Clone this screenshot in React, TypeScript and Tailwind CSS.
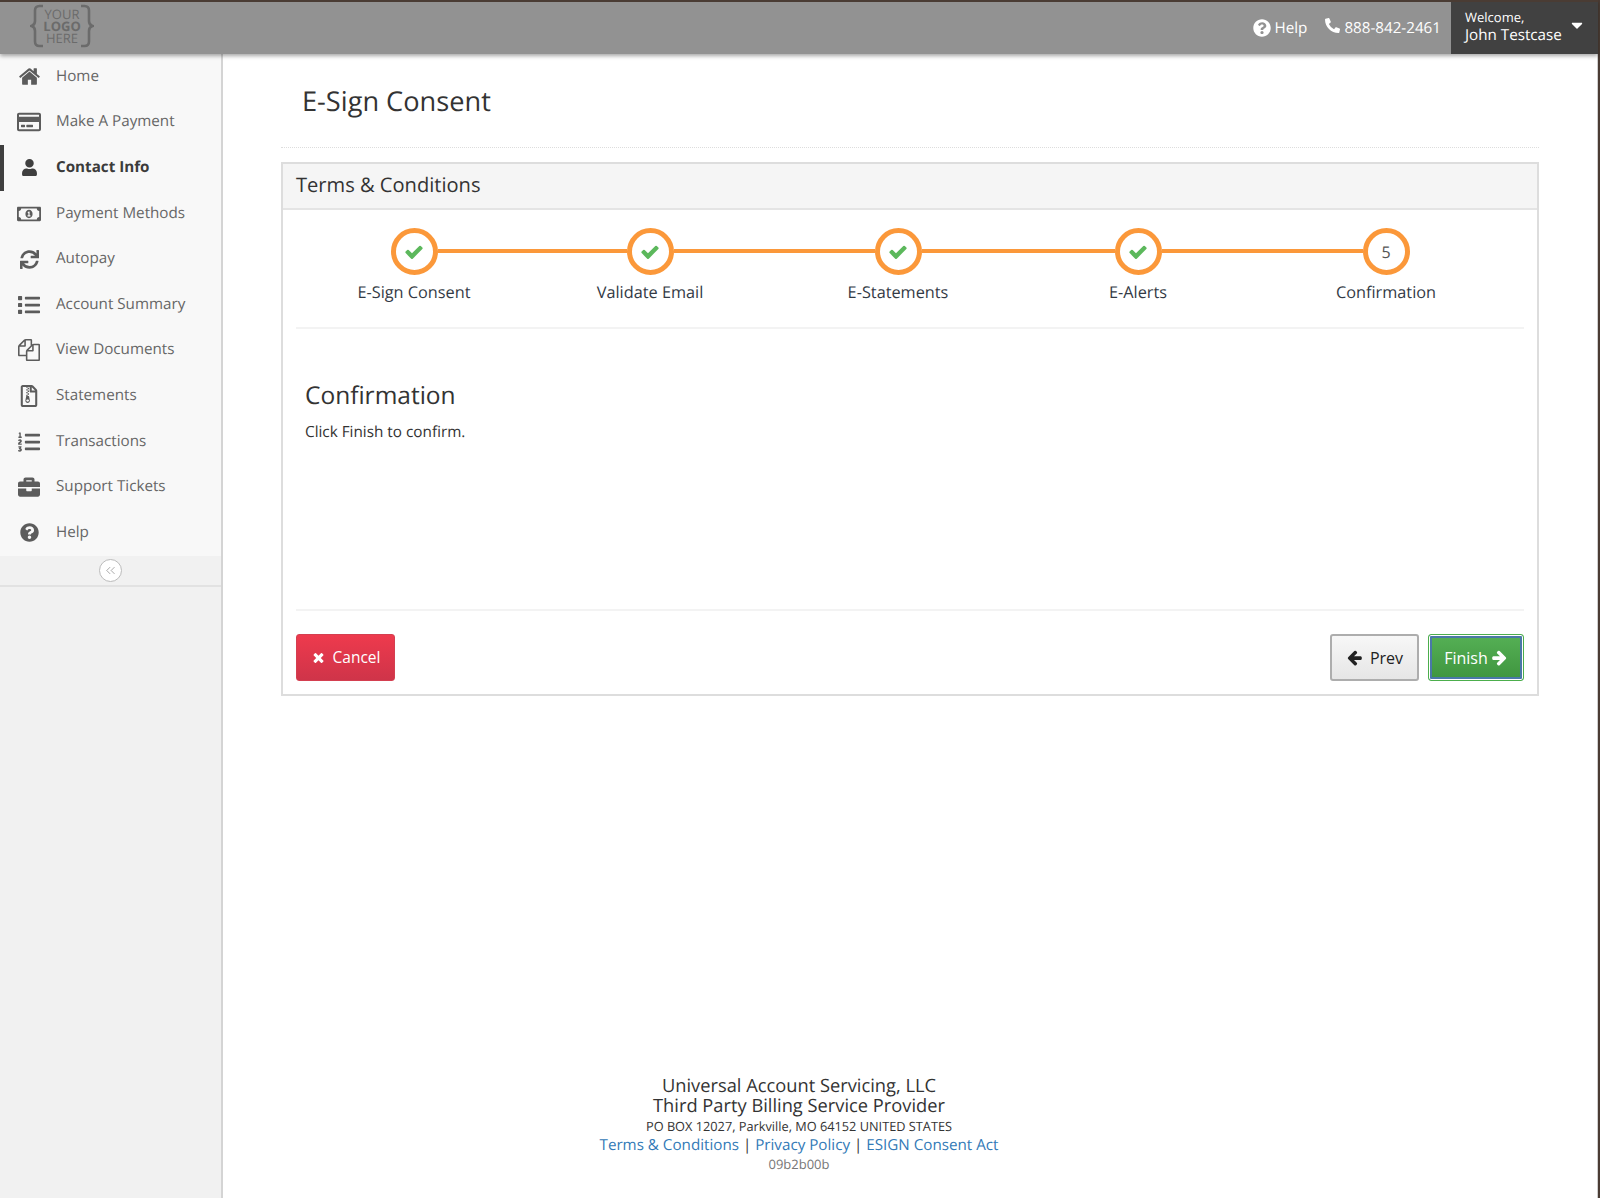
import type { ReactNode } from 'react'
import {
  FaBriefcase,
  FaCaretDown,
  FaList,
  FaListOl,
  FaPhoneAlt,
  FaQuestionCircle,
  FaRegCreditCard,
  FaRegFileArchive,
  FaRegMoneyBillAlt,
  FaSync,
  FaUser,
} from 'react-icons/fa'
import { ChevronsLeft } from 'lucide-react'

// font-awesome 4 shapes that the fa5 set in react-icons drew differently
function Fa4({ d, className }: { d: string; className?: string }) {
  return (
    <svg viewBox="0 0 1792 1792" fill="currentColor" className={className}>
      <path d={d} />
    </svg>
  )
}

const homePath =
  'M1472 992v480q0 26-19 45t-45 19h-384v-384h-256v384h-384q-26 0-45-19t-19-45v-480q0-1 .5-3t.5-3l575-474 575 474q1 2 1 6zm223-69l-62 74q-8 9-21 11h-3q-13 0-21-7l-692-577-692 577q-12 8-24 7-13-2-21-11l-62-74q-8-10-7-23.5t11-21.5l719-599q32-26 76-26t76 26l244 204v-195q0-14 9-23t23-9h192q14 0 23 9t9 23v408l219 182q10 8 11 21.5t-7 23.5z'
const filesPath =
  'M1696 384q40 0 68 28t28 68v1216q0 40-28 68t-68 28h-960q-40 0-68-28t-28-68v-288h-544q-40 0-68-28t-28-68v-672q0-40 20-88t48-76l408-408q28-28 76-48t88-20h416q40 0 68 28t28 68v328q68-40 128-40h416zm-544 213l-299 299h299v-299zm-640-384l-299 299h299v-299zm196 647l316-316v-416h-384v416q0 40-28 68t-68 28h-416v640h512v-256q0-40 20-88t48-76zm956 804v-1152h-384v416q0 40-28 68t-68 28h-416v640h896z'
const checkPath =
  'M1671 566q0 40-28 68l-724 724-136 136q-28 28-68 28t-68-28l-136-136-362-362q-28-28-28-68t28-68l136-136q28-28 68-28t68 28l294 295 656-657q28-28 68-28t68 28l136 136q28 28 28 68z'
const timesPath =
  'M1490 1322q0 40-28 68l-136 136q-28 28-68 28t-68-28l-294-294-294 294q-28 28-68 28t-68-28l-136-136q-28-28-28-68t28-68l294-294-294-294q-28-28-28-68t28-68l136-136q28-28 68-28t68 28l294 294 294-294q28-28 68-28t68 28l136 136q28 28 28 68t-28 68l-294 294 294 294q28 28 28 68z'
const arrowLeftPath =
  'M1664 896v128q0 53-32.5 90.5t-84.5 37.5h-704l293 294q38 36 38 90t-38 90l-75 76q-37 37-90 37-52 0-91-37l-651-652q-37-37-37-90 0-52 37-91l651-650q38-38 91-38 52 0 90 38l75 74q38 38 38 91t-38 91l-293 293h704q52 0 84.5 37.5t32.5 90.5z'
const arrowRightPath =
  'M1600 960q0 54-37 91l-651 651q-39 37-91 37-51 0-90-37l-75-75q-38-38-38-91t38-91l293-293h-704q-52 0-84.5-37.5t-32.5-90.5v-128q0-53 32.5-90.5t84.5-37.5h704l-293-294q-38-36-38-90t38-90l75-75q38-38 90-38 53 0 91 38l651 651q37 35 37 90z'

const navItems: { label: string; icon: ReactNode; active?: boolean }[] = [
  { label: 'Home', icon: <Fa4 d={homePath} className="w-[23px] h-[23px]" /> },
  { label: 'Make A Payment', icon: <FaRegCreditCard className="text-[24px]" /> },
  { label: 'Contact Info', icon: <FaUser className="text-[17px]" />, active: true },
  { label: 'Payment Methods', icon: <FaRegMoneyBillAlt className="text-[24px]" /> },
  { label: 'Autopay', icon: <FaSync className="text-[19px]" /> },
  { label: 'Account Summary', icon: <FaList className="text-[22px]" /> },
  { label: 'View Documents', icon: <Fa4 d={filesPath} className="w-[22px] h-[22px]" /> },
  { label: 'Statements', icon: <FaRegFileArchive className="text-[22px]" /> },
  { label: 'Transactions', icon: <FaListOl className="text-[22px]" /> },
  { label: 'Support Tickets', icon: <FaBriefcase className="text-[22px]" /> },
  { label: 'Help', icon: <FaQuestionCircle className="text-[19px]" /> },
]

const steps = [
  { label: 'E-Sign Consent', done: true },
  { label: 'Validate Email', done: true },
  { label: 'E-Statements', done: true },
  { label: 'E-Alerts', done: true },
  { label: 'Confirmation', done: false },
]

function Brace({ flip }: { flip?: boolean }) {
  return (
    <svg viewBox="0 0 14 44" className={'w-[14px] h-[44px] ' + (flip ? '-scale-x-100' : '')} fill="none" stroke="currentColor" strokeWidth="2.6">
      <path d="M13 2H9.5Q5 2 5 6.5V17Q5 21 1.5 22Q5 23 5 27V37.5Q5 42 9.5 42H13" />
    </svg>
  )
}

function Logo() {
  return (
    <div className="flex items-center ml-[30px] -mt-[5px] text-[#6b6b6b]">
      <Brace />
      <div className="flex flex-col items-center text-[13px] leading-[12px] w-[36px]">
        <span>YOUR</span>
        <span className="font-bold">LOGO</span>
        <span>HERE</span>
      </div>
      <Brace flip />
    </div>
  )
}

function Header() {
  return (
    <header className="h-[54px] bg-[#929292] border-t-2 border-[#4a3c34] flex items-center justify-between shadow-[0_2px_4px_rgba(0,0,0,0.35)] relative z-10 shrink-0">
      <Logo />
      <div className="flex items-center h-full text-white">
        <div className="flex items-center gap-1 text-[15.2px]">
          <FaQuestionCircle className="text-[18px]" />
          <span>Help</span>
        </div>
        <div className="flex items-center gap-1 text-[15.2px] ml-[18px]">
          <FaPhoneAlt className="text-[15px] -mt-1" />
          <span>888-842-2461</span>
        </div>
        <div className="ml-[10px] w-[147px] h-full bg-[#414141] pl-[14px] pt-[6px] flex justify-between pr-[12px]">
          <div>
            <div className="text-[13px] leading-[18px]">Welcome,</div>
            <div className="text-[15.2px] leading-[19px] whitespace-nowrap">John Testcase</div>
          </div>
          <FaCaretDown className="text-[18px] mt-[8px]" />
        </div>
      </div>
    </header>
  )
}

function Sidebar() {
  return (
    <aside className="w-[223px] shrink-0 bg-[#f1f1f1] border-r-2 border-[#d4d4d4]">
      <nav className="bg-[#f8f8f8]">
        {navItems.map((item) => (
          <div
            key={item.label}
            className={
              'h-[45.6px] flex items-center border-l-4 ' +
              (item.active ? 'border-[#3f3f3f] text-[#3b3b3b] font-bold' : 'border-transparent text-[#666666]')
            }
          >
            <div className={'w-[52px] pr-[2px] flex justify-center ' + (item.active ? 'text-[#3f3f3f]' : 'text-[#5c5c5c]')}>
              {item.icon}
            </div>
            <span className="text-[15.2px] pb-[1px]">{item.label}</span>
          </div>
        ))}
      </nav>
      <div className="h-[31px] border-b-2 border-[#e2e2e2] flex items-center justify-center">
        <div className="w-[23px] h-[23px] rounded-full border border-[#bbbbbb] bg-white flex items-center justify-center text-[#777777]">
          <ChevronsLeft size={15} strokeWidth={1} />
        </div>
      </div>
    </aside>
  )
}

function Step({ label, done, index }: { label: string; done: boolean; index: number }) {
  return (
    <div className="flex flex-col items-center">
      <div className="flex items-center w-full">
        <div className={'flex-1 h-[4px] mb-[2px] ' + (index === 0 ? '' : 'bg-[#fb983a]')} />
        <div className="w-[47px] h-[47px] rounded-full border-[5px] border-[#fb983a] bg-white flex items-center justify-center shrink-0">
          {done ? <Fa4 d={checkPath} className="w-[20px] h-[20px] text-[#5cb85c]" /> : <span className="text-[16px] text-[#555555]">{index + 1}</span>}
        </div>
        <div className={'flex-1 h-[4px] mb-[2px] ' + (index === steps.length - 1 ? '' : 'bg-[#fb983a]')} />
      </div>
      <div className="mt-[6px] text-[16.3px] leading-[22px] text-[#333a45]">{label}</div>
    </div>
  )
}

function Footer() {
  return (
    <footer className="mt-auto pr-[280px] pb-[23px] text-center text-[#333333]">
      <div className="text-[18.3px] leading-[20px]">Universal Account Servicing, LLC</div>
      <div className="text-[18.3px] leading-[20px]">Third Party Billing Service Provider</div>
      <div className="text-[12.75px] leading-[20px]">PO BOX 12027, Parkville, MO 64152 UNITED STATES</div>
      <div className="text-[15.2px] leading-[18px]">
        <a className="text-[#337ab7]">Terms &amp; Conditions</a> | <a className="text-[#337ab7]">Privacy Policy</a> |{' '}
        <a className="text-[#337ab7]">ESIGN Consent Act</a>
      </div>
      <div className="text-[13px] leading-[21px] text-[#777777]">09b2b00b</div>
    </footer>
  )
}

export default function App() {
  return (
    <div className="min-h-[1198px] flex flex-col bg-white border-r-2 border-[#4a3c34] font-['Open_Sans',sans-serif] [text-rendering:geometricPrecision]">
      <Header />
      <div className="flex flex-1">
        <Sidebar />
        <main className="flex-1 flex flex-col min-w-0 pl-[58px] border-r border-[#cfcfcf]">
          <div className="w-[1258px]">
            <h1 className="pl-[21px] pt-[27px] pb-[27px] text-[27.2px] leading-[39px] text-[#333333] border-b border-dotted border-[#dddddd]">
              E-Sign Consent
            </h1>
            <section className="mt-[14px] border-2 border-[#dddddd]">
              <div className="h-[46px] px-[13px] pb-[2px] flex items-center bg-[#f5f5f5] border-b-2 border-[#e4e4e4] text-[20.1px] text-[#333333]">
                Terms &amp; Conditions
              </div>
              <div className="px-[13px]">
                <div className="grid grid-cols-[236px_236px_260px_220px_276px] pt-[18px] pb-[24px] border-b-2 border-[#f3f3f3]">
                  {steps.map((s, i) => (
                    <Step key={s.label} label={s.label} done={s.done} index={i} />
                  ))}
                </div>
                <div className="h-[282px] border-b-2 border-[#f3f3f3] pl-[9px] pt-[48px]">
                  <h2 className="text-[24.5px] leading-[38px] text-[#333333]">Confirmation</h2>
                  <p className="text-[15.3px] leading-[22px] mt-[6px] text-[#333333]">Click Finish to confirm.</p>
                </div>
                <div className="flex justify-between items-center pt-[23px] pb-[13px]">
                  <button className="h-[47px] w-[99px] rounded-[3px] border border-[#d43f50] bg-gradient-to-b from-[#ee3a4d] to-[#cf3449] text-white text-[15.5px] flex items-center justify-center gap-[7px]">
                    <Fa4 d={timesPath} className="w-[15px] h-[15px]" />
                    Cancel
                  </button>
                  <div className="flex gap-[9px]">
                    <button className="h-[47px] w-[89px] rounded-[3px] border-2 border-[#adadad] bg-gradient-to-b from-[#f7f7f7] to-[#e6e6e6] text-[#222222] text-[16px] flex items-center justify-center gap-[7px]">
                      <Fa4 d={arrowLeftPath} className="w-[17px] h-[17px]" />
                      Prev
                    </button>
                    <button className="h-[47px] w-[96px] rounded-[3px] border border-[#4cae4c] shadow-[inset_0_0_0_1px_#ffffff,inset_0_0_0_3px_#4a78a8] bg-gradient-to-b from-[#55b055] to-[#3f953f] text-white text-[16px] flex items-center justify-center gap-[3px]">
                      Finish
                      <Fa4 d={arrowRightPath} className="w-[17px] h-[17px]" />
                    </button>
                  </div>
                </div>
              </div>
            </section>
          </div>
          <Footer />
        </main>
      </div>
    </div>
  )
}
